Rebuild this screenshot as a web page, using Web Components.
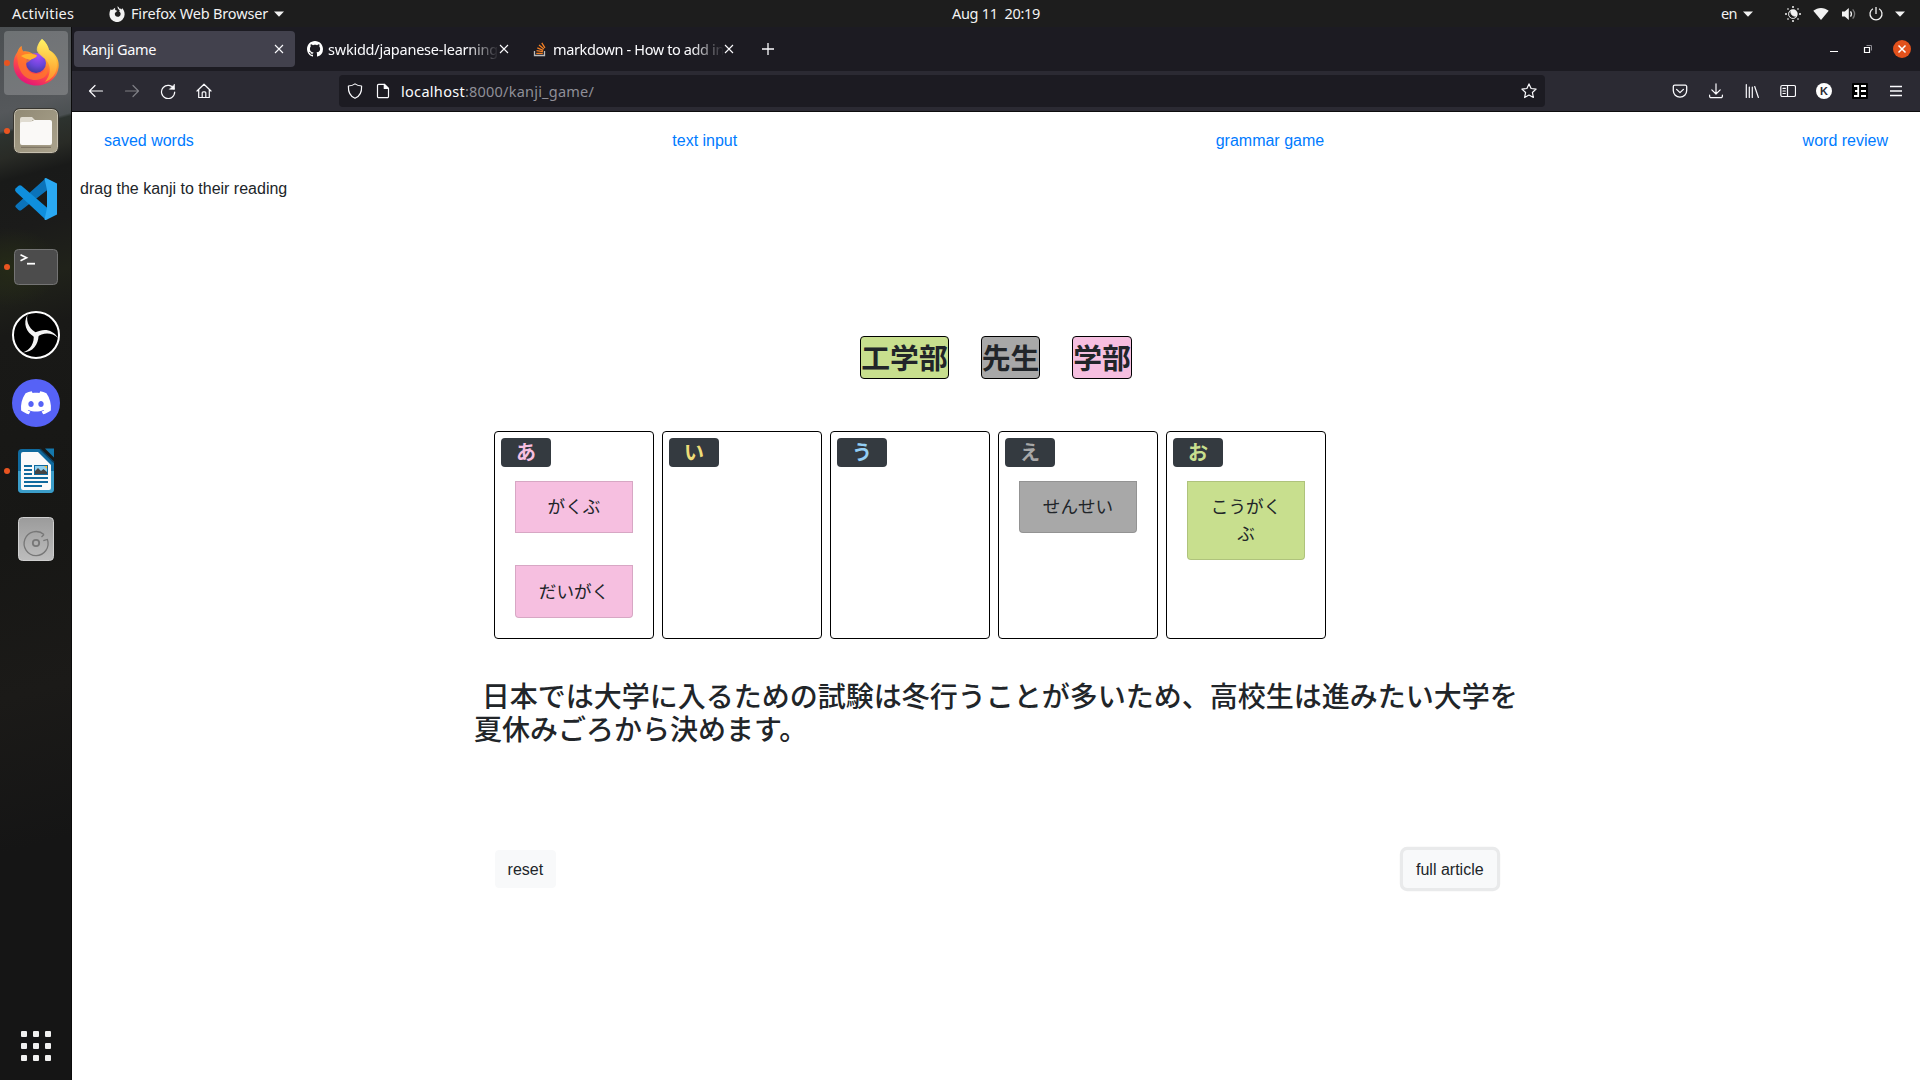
<!DOCTYPE html>
<html lang="en">
<head>
<meta charset="utf-8">
<title>Kanji Game</title>
<style>
html,body{margin:0;height:100%;overflow:hidden;background:#fff}
body{font-family:"Liberation Sans","Noto Sans CJK JP",sans-serif;font-size:16px;line-height:24px;color:#212529}
desktop-shell{height:1080px;width:1920px}
</style>
</head>
<body>
<desktop-shell>
  <top-bar slot="top"></top-bar>
  <app-dock slot="dock"></app-dock>
  <browser-window>
    <browser-tab slot="tabs" active label="Kanji Game" fit="74"></browser-tab>
    <browser-tab slot="tabs" icon="github" label="swkidd/japanese-learning" fit="170"></browser-tab>
    <browser-tab slot="tabs" icon="stack" label="markdown - How to add in" fit="171"></browser-tab>
    <kanji-page></kanji-page>
  </browser-window>
</desktop-shell>
<script>
const svg=(w,h,b)=>`<svg width="${w}" height="${h}" viewBox="0 0 ${w} ${h}" fill="none" xmlns="http://www.w3.org/2000/svg">${b}</svg>`;
const line=b=>svg(16,16,`<g stroke="#fbfbfe" stroke-width="1.2" stroke-linecap="round" stroke-linejoin="round">${b}</g>`);
const ICONS={
 caret:svg(10,6,'<path d="M0 .5h10L5 5.8z" fill="#f2f2f2"/>'),
 foxmono:svg(16,16,'<path d="M8.6.2c1 .7 1.500 1.400 1.700 2.200 1-.1 1.900.3 2.500 1l.2-1.300c1.600 1.500 2.600 3.700 2.600 6A7.600 7.600 0 1 1 .5 7.300C.6 5.400 1.100 4 2 2.900l.3 1.200c.6-.4 1.200-.6 1.900-.7C5 2.400 5.700 2 6.300 1.800c-.3.8-.3 1.500 0 2.100.4.500 1.200.8 2 .9-.1.700-1 .9-1.500 1.300-.4.4-.3 1-.9 1.200-.4 1.900.9 3.500 2.700 3.500 1.900 0 3.200-1.400 3-3.300-.2-1.300-1-2-1.800-2.500.3-.1.700-.1 1 0C10.300 3.300 8.100 3 8.600.2z" fill="#f2f2f2"/>'),
 close:svg(10,10,'<path d="M1 1l8 8M9 1L1 9" stroke="#fbfbfe" stroke-width="1.100"/>'),
 plus:svg(12,12,'<path d="M6 0v12M0 6h12" stroke="#fbfbfe" stroke-width="1.300"/>'),
 github:svg(16,16,'<path fill="#fff" d="M8 0C3.58 0 0 3.58 0 8c0 3.54 2.29 6.53 5.47 7.59.4.07.55-.17.55-.38 0-.19-.01-.82-.01-1.49-2.01.37-2.53-.49-2.69-.94-.09-.23-.48-.94-.82-1.13-.28-.15-.68-.52-.01-.53.63-.01 1.08.58 1.23.82.72 1.21 1.87.87 2.33.66.07-.52.28-.87.51-1.07-1.78-.2-3.64-.89-3.64-3.95 0-.87.31-1.59.82-2.15-.08-.2-.36-1.02.08-2.12 0 0 .67-.21 2.2.82.64-.18 1.32-.27 2-.27.68 0 1.36.09 2 .27 1.53-1.04 2.2-.82 2.2-.82.44 1.1.16 1.92.08 2.12.51.56.82 1.27.82 2.15 0 3.07-1.87 3.75-3.65 3.95.29.25.54.73.54 1.48 0 1.07-.01 1.93-.01 2.2 0 .21.15.46.55.38A8.01 8.01 0 0 0 16 8c0-4.42-3.58-8-8-8z"/>'),
 stack:svg(16,16,'<path d="M2.500 10v4.500h10V10" stroke="#bcbbbb" stroke-width="1.300"/><path d="M4.300 12.300h6.500M4.500 9.700l6.400.9M5.300 6.900l5.900 2.400M7 4.100l4.900 3.800M9.800 1.800l3.100 5" stroke="#f48024" stroke-width="1.300"/>'),
 back:line('<path d="M14.500 8H1.500M7 2.500L1.500 8 7 13.500"/>'),
 forward:line('<path d="M1.500 8h13M9 2.500L14.500 8 9 13.500"/>'),
 reload:line('<path d="M14 6A6.600 6.600 0 1 0 14.700 9"/><path d="M14.500 1.500v4.800H9.700z" fill="#fbfbfe" stroke-width=".6"/>'),
 home:line('<path d="M1 8L8 1.200 15 8M2.700 6.800v7.700h10.600V6.800M6.200 14.300v-4.500a1 1 0 0 1 1-1h1.600a1 1 0 0 1 1 1v4.500"/>'),
 shield:line('<path d="M8 .9c1.800 1.400 4 2 6.600 2.100C14.900 9 13.200 13.200 8 15.300 2.800 13.200 1.100 9 1.400 3 4 2.900 6.200 2.300 8 .9z"/>'),
 page:line('<path d="M3.700 1.300h5.800l4 4v8.200a1.200 1.200 0 0 1-1.200 1.200H3.700a1.200 1.200 0 0 1-1.200-1.200v-11a1.200 1.200 0 0 1 1.200-1.200z"/><path d="M9.300 1.500v4h4z" fill="#fbfbfe"/>'),
 star:line('<path d="M8 .9l2.100 4.600 5 .6-3.700 3.400 1 5L8 12l-4.400 2.500 1-5L.9 6.100l5-.6z"/>'),
 pocket:line('<path d="M2.700 2.200h10.600a1.400 1.400 0 0 1 1.400 1.400V7.500a6.700 6.700 0 0 1-13.400 0V3.600a1.400 1.400 0 0 1 1.400-1.400zM4.600 6.400L8 9.600l3.400-3.200" stroke-width="1.300"/>'),
 download:line('<path d="M8 .8v10M3.800 6.900L8 11l4.200-4.100M1.600 12v1.200a1.500 1.500 0 0 0 1.500 1.500h9.800a1.500 1.500 0 0 0 1.500-1.500V12"/>'),
 library:line('<path d="M2.300 1.500v13M5.300 4v10.500M8.300 4v10.500M10.700 3.500l3.700 11"/>'),
 sidebar:line('<rect x=".8" y="2.500" width="14.700" height="11" rx="1.500"/><path d="M7.500 2.500v11M3 5.400h2.300M3 8h2.300M3 10.500h2.300"/>'),
 kext:svg(16,16,'<circle cx="8" cy="8" r="8" fill="#fff"/><text x="8" y="12" font-family="Liberation Sans,sans-serif" font-size="11" font-weight="700" text-anchor="middle" fill="#2b2a33">K</text>'),
 eext:svg(16,16,'<rect width="16" height="16" rx="1" fill="#000"/><path d="M2 3h4.200v10H2M3 8h3M9 3h5M9 8h5M9 13h5" stroke="#fff" stroke-width="1.800"/>'),
 menu:svg(16,16,'<path d="M2 3.500h12M2 8h12M2 12.500h12" stroke="#fbfbfe" stroke-width="1.300"/>'),
 minimize:svg(16,16,'<path d="M4 10.500h8" stroke="#fff"/>'),
 restore:svg(16,16,'<path d="M4.500 6.500h5v5h-5z" stroke="#fff" stroke-width="1.200"/><path d="M6.500 4.500h5v5" stroke="#8c8b92"/>'),
 shut:svg(18,18,'<circle cx="9" cy="9" r="9" fill="#e2511c"/><path d="M5.500 5.500l7 7M12.500 5.500l-7 7" stroke="#fff" stroke-width="1.500"/>'),
 night:svg(16,16,'<g fill="#bdbdbd"><rect x="7" y="0" width="2" height="2"/><rect x="7" y="14" width="2" height="2"/><rect x="0" y="7" width="2" height="2"/><rect x="14" y="7" width="2" height="2"/><rect x="2.200" y="2.200" width="1.600" height="1.600"/><rect x="12.200" y="2.200" width="1.600" height="1.600"/><rect x="2.200" y="12.200" width="1.600" height="1.600"/><rect x="12.200" y="12.200" width="1.600" height="1.600"/></g><circle cx="8" cy="8" r="4.700" fill="#f2f2f2"/><path d="M6 4.300a4.300 4.300 0 1 0 5.800 5.700c-3.600 1.200-6.900-2-5.800-5.700z" fill="#1d1d1d" stroke="#f2f2f2" stroke-width=".8"/>'),
 wifi:svg(16,16,'<path d="M.3 4.800C4.600.9 11.400.9 15.700 4.800L8 14z" fill="#f2f2f2"/>'),
 volume:svg(16,16,'<path d="M1 5.500h2.800L7.800 2v12L3.800 10.500H1z" fill="#f2f2f2"/><path d="M9.500 5.400q1.900 2.600 0 5.200" stroke="#f2f2f2" stroke-width="1.300"/><path d="M11.700 3.400q3.800 4.600 0 9.200" stroke="#777" stroke-width="1.300"/>'),
 power:svg(16,16,'<path d="M4.900 2.700a6 6 0 1 0 6.200 0M8 1v7" stroke="#f2f2f2" stroke-width="1.300"/>')
};
const A=b=>svg(72,68,b);
const ARM='M34 35.800C26.500 31 22.500 23 27.500 13.500 25.800 21.500 30 29.500 38 32.200z';
const APPS={
 firefox:A(`<defs><linearGradient id="a" x1=".8" y1="0" x2=".3" y2="1"><stop offset=".05" stop-color="#fff44f"/><stop offset=".4" stop-color="#ffa42b"/><stop offset=".65" stop-color="#ff4f45"/><stop offset="1" stop-color="#e3107c"/></linearGradient><radialGradient id="b" cx=".6" cy=".15" r=".9"><stop offset="0" stop-color="#a34dfa"/><stop offset=".55" stop-color="#6b46d9"/><stop offset="1" stop-color="#3e3a9b"/></radialGradient><linearGradient id="c" x1="0" y1="0" x2="0" y2="1"><stop offset="0" stop-color="#fff36a"/><stop offset="1" stop-color="#ff9a25"/></linearGradient></defs>
 <rect x="4" y="2" width="64" height="64" rx="4" fill="#fff" fill-opacity=".2"/>
 <path d="M42 10c4 3 6 7 7 11 6 3 10 9 9.700 15.500C58.300 48.500 48.500 56.500 36.500 56.500 23.500 56.500 13.500 47 13.500 35c0-5 1.500-9 4-12 .5-2 2-4.500 4-6 0 2 .5 4 1.500 5.500 3-.5 6 0 9 2l8 0C36 19 39 13 42 10z" fill="url(#a)"/>
 <circle cx="36" cy="34" r="10" fill="url(#b)"/>
 <path d="M42 10c4 3 6 7 7 11 5 4 8 9 8 15 0 9-6 15-12 17 4-5 6-11 4-17-2-7-9-8-12-14-1-4 2-9 5-12z" fill="url(#c)" opacity=".85"/>
 <path d="M17.500 23q2-4.500 4-6 0 3 2 6c3-.8 6 0 9 2 3 0 4.500.5 4.500 1.500-1 3-5 3-6.500 4.500-.5 2-3 1-4.500 4 0 6 5 10 10 10 6 0 10-4 11-8 3 9-4 14-12 14-10 0-19-9-17.500-28z" fill="#ff7a2a" opacity=".75"/><path d="M21 27c5-3 11-3 16-.5-1 3-5 3-6.500 4.500-3-1-7-2-9.500-4z" fill="#ffb22e"/>`),
 files:A(`<defs><linearGradient id="d" x1="0" y1="0" x2="1" y2="1"><stop stop-color="#918a75"/><stop offset="1" stop-color="#aaa28c"/></linearGradient></defs><rect x="14.500" y="12.500" width="43" height="43" rx="5" fill="url(#d)" stroke="#c5bfae"/><rect x="13.500" y="11.500" width="45" height="45" rx="6" stroke="#37352f"/><path d="M20 22a2 2 0 0 1 2-2h10l3 3h-3l3 5H20z" fill="#e0dcd1"/><path d="M20 27a2 2 0 0 1 2-2h9l3-2h16a2 2 0 0 1 2 2v21a2 2 0 0 1-2 2H22a2 2 0 0 1-2-2z" fill="#faf9f7"/><path d="M21 50.300h30" stroke="#776f5e"/>`),
 code:A('<path d="M46 13L16.500 39.500q-2 1.500-1 2.500l3 3q1.500 1 3 0L48 24.500z" fill="#0b73ba"/><path d="M15.500 23.500l3-2.800q1.500-1 3 0L48 43.500 46 55 16 27q-1.700-2-.5-3.500z" fill="#0f8fdd"/><path d="M46 13l11 5.500v31L46 55q-1 0-1.500-.5L47 43V25l-2.500-11.500z" fill="#2aa9f3"/>'),
 term:A('<rect x="14.500" y="16.500" width="43" height="35" rx="4" fill="#4c4c4c" stroke="#747474"/><path d="M20.500 21.700l6 3-6 3" stroke="#fff" stroke-width="1.700"/><path d="M27 30.700h8" stroke="#fff" stroke-width="1.800"/>'),
 obs:A(`<circle cx="36" cy="34" r="23" fill="#000" stroke="#fff" stroke-width="2"/><g fill="#f4f4f4"><path d="${ARM}"/><path d="${ARM}" transform="rotate(120 36 34)"/><path d="${ARM}" transform="rotate(240 36 34)"/></g>`),
 discord:A('<circle cx="36" cy="34" r="24" fill="#5662f6"/><path transform="translate(21 18.800) scale(1.250)" fill="#fff" d="M20.317 4.3698a19.7913 19.7913 0 00-4.8851-1.5152.0741.0741 0 00-.0785.0371c-.211.3753-.4447.8648-.6083 1.2495-1.8447-.2762-3.68-.2762-5.4868 0-.1636-.3933-.4058-.8742-.6177-1.2495a.077.077 0 00-.0785-.037 19.7363 19.7363 0 00-4.8852 1.515.0699.0699 0 00-.0321.0277C.5334 9.0458-.319 13.5799.0992 18.0578a.0824.0824 0 00.0312.0561c2.0528 1.5076 4.0413 2.4228 5.9929 3.0294a.0777.0777 0 00.0842-.0276c.4616-.6304.8731-1.2952 1.226-1.9942a.076.076 0 00-.0416-.1057c-.6528-.2476-1.2743-.5495-1.8722-.8923a.077.077 0 01-.0076-.1277c.1258-.0943.2517-.1923.3718-.2914a.0743.0743 0 01.0776-.0105c3.9278 1.7933 8.18 1.7933 12.0614 0a.0739.0739 0 01.0785.0095c.1202.099.246.1981.3728.2924a.077.077 0 01-.0066.1276 12.2986 12.2986 0 01-1.873.8914.0766.0766 0 00-.0407.1067c.3604.698.7719 1.3628 1.225 1.9932a.076.076 0 00.0842.0286c1.961-.6067 3.9495-1.5219 6.0023-3.0294a.077.077 0 00.0313-.0552c.5004-5.177-.8382-9.6739-3.5485-13.6604a.061.061 0 00-.0312-.0286zM8.02 15.3312c-1.1825 0-2.1569-1.0857-2.1569-2.419 0-1.3332.9555-2.4189 2.157-2.4189 1.2108 0 2.1757 1.0952 2.1568 2.419 0 1.3332-.9555 2.4189-2.1569 2.4189zm7.9748 0c-1.1825 0-2.1569-1.0857-2.1569-2.419 0-1.3332.9554-2.4189 2.1569-2.4189 1.2108 0 2.1757 1.0952 2.1568 2.419 0 1.3332-.946 2.4189-2.1568 2.4189Z"/>'),
 writer:A('<path d="M22 12h18l14 13v27a4 4 0 0 1-4 4H22a4 4 0 0 1-4-4V16a4 4 0 0 1 4-4z" fill="#106a9e"/><path d="M18 34h36v18a4 4 0 0 1-4 4H22a4 4 0 0 1-4-4z" fill="#3b9dc9"/><path d="M21 17a2 2 0 0 1 2-2h15l13 13v23a2 2 0 0 1-2 2H23a2 2 0 0 1-2-2z" fill="#fafafa"/><path d="M40 12l14 13.500" stroke="#0d3f5e" stroke-width="1.500"/><path d="M45 11.500h9v9z" fill="#1478ad"/><path d="M24 29h8M24 33h8M24 37h8M24 41h24M24 45h24M24 49h18" stroke="#106a9e" stroke-width="1.900"/><rect x="34.500" y="28.500" width="13" height="9" fill="#8fd0ef" stroke="#106a9e"/><path d="M35 37v-3l3-3 3 3 2.500-2 3.500 3v2z" fill="#444"/><path d="M44 29h3v3z" fill="#f6b93a"/>'),
 disk:A('<defs><linearGradient id="e" x2="0" y2="1"><stop stop-color="#9b9b9b"/><stop offset="1" stop-color="#bdbdbd"/></linearGradient></defs><rect x="18.500" y="12.500" width="35" height="43" rx="4" fill="url(#e)" stroke="#cfcfcf"/><circle cx="36" cy="38" r="3.200" stroke="#777" stroke-width="1.800"/><path d="M44 29.500A12 12 0 1 0 47.400 34.500L43.300 35.700" stroke="#777" stroke-width="1.300"/><path d="M44 29.500l-2.500 2.500" stroke="#777" stroke-width="1.300"/>')
};
function el(name,render){customElements.define(name,class extends HTMLElement{
  connectedCallback(){if(this.shadowRoot)return;this.attachShadow({mode:'open'}).innerHTML=render(this);}
});}
const UI='font:14.500px/20px "Noto Sans","Open Sans",sans-serif;';

el('desktop-shell',()=>`<style>:host{display:grid;grid-template:27px 1fr/72px 1fr}</style><slot name="top"></slot><slot name="dock"></slot><slot></slot>`);

el('top-bar',()=>`<style>:host{grid-column:1/3;display:grid;grid-template-columns:1fr auto 1fr;background:#1d1d1d;color:#f2f2f2;${UI}height:27px;align-items:center}
 .l,.r{display:flex;align-items:center}.l{padding-left:12px}.r{justify-content:flex-end;padding-right:15px}ui-icon,fit-text{flex:none}
 fit-text{margin-top:-2px}.app{margin-left:35px;margin-right:6px}.clock{padding-left:72px}</style>
 <div class="l"><fit-text fit="62">Activities</fit-text><ui-icon class="app" name="foxmono"></ui-icon><fit-text fit="137">Firefox Web Browser</fit-text><ui-icon name="caret" style="margin-left:6px"></ui-icon></div>
 <fit-text class="clock" fit="88">Aug 11 &nbsp;20:19</fit-text>
 <div class="r"><fit-text fit="16">en</fit-text><ui-icon name="caret" style="margin:0 32px 0 6px"></ui-icon><ui-icon name="night" style="margin-right:12px"></ui-icon><ui-icon name="wifi" style="margin-right:12px"></ui-icon><ui-icon name="volume" style="margin-right:11px"></ui-icon><ui-icon name="power" style="margin-right:11px"></ui-icon><ui-icon name="caret"></ui-icon></div>`);

el('app-dock',()=>`<style>:host{display:flex;flex-direction:column;padding-top:2px;box-sizing:border-box;border-right:1px solid #0b0b0b;background:
 radial-gradient(50px 40px at 10px 240px,#252a17,transparent),
 linear-gradient(165deg,#4b4f52 0,#55585b 83px,#4b5052 101px,#2d332f 104px,#292b26 128px,#191a19 150px,#1b1b1a 200px,#20221a 250px,#191917 300px,#171715 500px,#1b1a18 650px,#151515 800px,#151515)}
 .apps{margin-top:auto;padding:0 0 19px 21px;display:grid;grid-template-columns:repeat(3,6px);gap:6px}.apps i{height:6px;border-radius:1px;background:#f1f1f0}</style>
 ${Object.keys(APPS).map(k=>`<dock-item app="${k}" ${/firefox|files|term|writer/.test(k)?'running':''}></dock-item>`).join('')}
 <div class="apps">${'<i></i>'.repeat(9)}</div>`);

el('dock-item',h=>`<style>:host{display:block;width:72px;height:68px;flex:none;position:relative}svg{display:block}i{position:absolute;left:4px;top:31px;width:6px;height:6px;border-radius:3px;background:#e95420}</style>${APPS[h.getAttribute('app')]}${h.hasAttribute('running')?'<i></i>':''}`);

el('ui-icon',h=>`<style>:host{display:block}svg{display:block}</style>${ICONS[h.getAttribute('name')]}`);

el('browser-window',()=>`<style>:host{display:flex;flex-direction:column;min-width:0;color:#fbfbfe}
 .tabs{height:44px;background:#1c1b22;display:flex;align-items:center;${UI}}
 .new{margin-left:17px}.win{margin-left:auto;display:flex;align-items:center;padding-right:9px}
 .nav{height:40px;background:#2b2a33;border-bottom:1px solid #0c0c0d;display:flex;align-items:center;padding:0 6px}
 .b{width:36px;display:flex;justify-content:center}
 .url{margin-left:117px;width:1206px;height:32px;border-radius:4px;background:#1c1b22;display:flex;align-items:center;box-sizing:border-box;padding:0 8px;${UI}}
 .r{margin-left:auto;display:flex}</style>
 <div class="tabs"><slot name="tabs"></slot><ui-icon class="new" name="plus"></ui-icon>
 <div class="win"><ui-icon name="minimize"></ui-icon><ui-icon name="restore" style="margin:0 17px 0 18px"></ui-icon><ui-icon name="shut"></ui-icon></div></div>
 <div class="nav">${['back','forward','reload','home'].map(n=>`<div class="b"${n=='forward'?' style="opacity:.4"':''}><ui-icon name="${n}"></ui-icon></div>`).join('')}
 <div class="url"><ui-icon name="shield"></ui-icon><ui-icon name="page" style="margin:0 10px 0 12px"></ui-icon><fit-text fit="64">localhost</fit-text><fit-text fit="129" style="color:#8f8f98">:8000/kanji_game/</fit-text><ui-icon name="star" style="margin-left:auto"></ui-icon></div>
 <div class="r">${['pocket','download','library','sidebar','kext','eext','menu'].map(n=>`<div class="b"><ui-icon name="${n}"></ui-icon></div>`).join('')}</div></div>
 <slot></slot>`);

el('browser-tab',h=>{const a=h.hasAttribute('active'),i=h.getAttribute('icon');return `<style>:host{display:flex;align-items:center;flex:none;box-sizing:border-box;width:${a?221:225}px;height:36px;margin-left:${a?2:0}px;border-radius:4px;padding:0 11px 0 ${a?8:12}px;${a?'background:#42414d;':''}}
 .i{margin-right:5px;flex:none}.t{flex:1;min-width:0;overflow:hidden;${a?'':'-webkit-mask:linear-gradient(90deg,#000 calc(100% - 32px),transparent);mask:linear-gradient(90deg,#000 calc(100% - 32px),transparent)'}}</style>
 ${i?`<ui-icon class="i" name="${i}"></ui-icon>`:''}<div class="t"><fit-text fit="${h.getAttribute('fit')}">${h.getAttribute('label')}</fit-text></div><ui-icon name="close"></ui-icon>`});

el('kanji-page',()=>`<style>:host{display:block;flex:1;background:#fff;color:#212529;padding:17px 0 0 8px;font:16px/24px "Liberation Sans","Noto Sans CJK JP",sans-serif}
 nav{display:flex;justify-content:space-between;padding:0 32px 0 24px}nav a{color:#007bff}
 p{margin:24px 0 0}.words{display:flex;gap:32px;margin:135px 0 0 780.300px}.cols{display:flex;gap:8px;margin:52px 0 0 414px}
 h3{margin:42px 0 0 394px;width:1056px;font:500 28px/33px "Liberation Sans","Noto Sans CJK JP",sans-serif;white-space:pre-wrap}
 .act{display:flex;justify-content:space-between;width:1002px;margin:103px 0 0 414.600px}</style>
 <nav><a>saved words</a><a>text input</a><a>grammar game</a><a>word review</a></nav>
 <p>drag the kanji to their reading</p>
 <div class="words"><kanji-word color="#c8df8e">工学部</kanji-word><kanji-word color="#a8a8a8">先生</kanji-word><kanji-word color="#f6bfe0">学部</kanji-word></div>
 <div class="cols">
 <kana-column kana="あ" color="#f6bfe0"><reading-card color="#f6bfe0">がくぶ</reading-card><reading-card last color="#f6bfe0">だいがく</reading-card></kana-column>
 <kana-column kana="い" color="#eedd78"></kana-column><kana-column kana="う" color="#93cff5"></kana-column>
 <kana-column kana="え" color="#a8a8a8"><reading-card last color="#a8a8a8">せんせい</reading-card></kana-column>
 <kana-column kana="お" color="#c8df8e"><reading-card last color="#c8df8e">こうがくぶ</reading-card></kana-column></div>
 <h3> 日本では大学に入るための試験は冬行うことが多いため、高校生は進みたい大学を夏休みごろから決めます。</h3>
 <div class="act"><soft-button>reset</soft-button><soft-button focused>full article</soft-button></div>`);

el('kanji-word',h=>`<style>:host{display:block;box-sizing:border-box;height:43px;border:1px solid #000;border-radius:4px;background:${h.getAttribute('color')};font:700 28.800px/39px "Noto Sans CJK JP",sans-serif}</style><slot></slot>`);
el('kana-column',h=>`<style>:host{display:block;box-sizing:border-box;width:160px;height:208px;border:1px solid #000;border-radius:4px;padding:6px}
 .k{width:50px;height:29px;border-radius:4px;background:#343a40;color:${h.getAttribute('color')};text-align:center;font:700 20px/27px "Noto Sans CJK JP",sans-serif}
 .l{padding:14px 14px 0;display:flex;flex-direction:column;gap:32px}</style><div class="k">${h.getAttribute('kana')}</div><div class="l"><slot></slot></div>`);
el('reading-card',h=>`<style>:host{display:block;box-sizing:border-box;border:1px solid rgba(0,0,0,.125);padding:12.300px 20px 11.700px;background:${h.getAttribute('color')};font:17.600px/26.400px "Liberation Sans","Noto Sans CJK JP",sans-serif;text-align:center;${h.hasAttribute('last')?'border-radius:0 0 4px 4px':''}}</style><slot></slot>`);
el('soft-button',h=>`<style>:host{display:block;border:1px solid #f8f9fa;border-radius:4px;background:#f8f9fa;padding:7px 12px 5px;${h.hasAttribute('focused')?'box-shadow:0 0 0 3.200px #e9eaeb':''}}</style><slot></slot>`);

// Labels with a fixed width: tracking is spread over the letters.
customElements.define('fit-text',class extends HTMLElement{
  connectedCallback(){
    if(this.shadowRoot)return;
    this.attachShadow({mode:'open'}).innerHTML='<style>:host{display:block;white-space:nowrap}span{display:inline-block}</style><span><slot></slot></span>';
    const s=this.shadowRoot.querySelector('span');
    const w=s.getBoundingClientRect().width,n=this.textContent.length;
    s.style.letterSpacing=((+this.getAttribute('fit')-w)/n)+'px';
  }
});
</script>
</body>
</html>
